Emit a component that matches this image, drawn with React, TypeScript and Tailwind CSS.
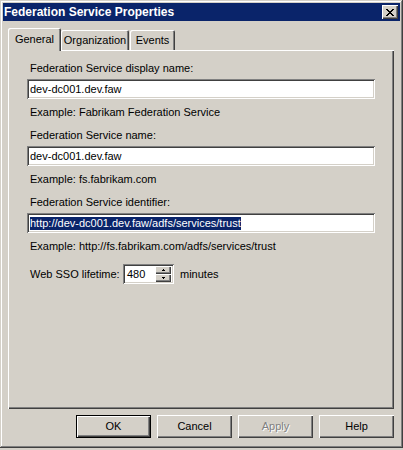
import React from 'react';

const raised =
  'shadow-[inset_1px_1px_#ffffff,inset_-1px_-1px_#404040,inset_-2px_-2px_#808080]';
const sunken =
  'shadow-[inset_1px_1px_#808080,inset_-1px_-1px_#ffffff,inset_2px_2px_#404040,inset_-2px_-2px_#d4d0c8]';

function Field({ label, value, example, selected }: { label: string; value: string; example: string; selected?: boolean }) {
  return (
    <div className="flex flex-col">
      <div className="pl-[3px] leading-[13px]">{label}</div>
      <div className={`mt-[4px] h-[20px] w-[348px] bg-white pl-[3px] flex items-center ${sunken}`}>
        {selected ? (
          <span className="bg-[#0a246a] text-white leading-[13px]">{value}</span>
        ) : (
          <span className="leading-[13px]">{value}</span>
        )}
      </div>
      <div className="mt-[7px] pl-[3px] leading-[13px]">{example}</div>
    </div>
  );
}

function Tab({ label, active, className }: { label: string; active?: boolean; className: string }) {
  return (
    <div
      className={`flex items-center justify-center bg-[#d4d0c8] rounded-t-[2px] shadow-[inset_1px_1px_#ffffff,inset_-1px_0_#404040,inset_-2px_0_#808080] ${
        active ? 'relative z-10 h-[23px] -mb-[1px] pb-[1px]' : 'h-[20px] pt-[1px]'
      } ${className}`}
    >
      {label}
    </div>
  );
}

function Button({ label, isDefault, disabled }: { label: string; isDefault?: boolean; disabled?: boolean }) {
  return (
    <div
      className={`w-[75px] h-[23px] flex items-center justify-center ${
        isDefault
          ? 'shadow-[inset_0_0_0_1px_#000000,inset_2px_2px_#ffffff,inset_-2px_-2px_#404040,inset_-3px_-3px_#808080]'
          : raised
      } ${disabled ? 'text-[#808080] [text-shadow:1px_1px_#ffffff]' : ''}`}
    >
      {label}
    </div>
  );
}

export default function App() {
  return (
    <div className="w-[403px] h-[450px] bg-[#d4d0c8] text-black text-[11px] font-['Liberation_Sans',Arial,sans-serif]">
      <div className="h-[448px] flex flex-col p-[3px] shadow-[inset_-1px_-1px_#404040,inset_1px_1px_#d4d0c8,inset_-2px_-2px_#808080,inset_2px_2px_#ffffff]">
        {/* title bar */}
        <div className="h-[18px] bg-[#0a246a] flex items-center pl-[1px] pr-[2px]">
          <span className="text-white font-bold text-[12px] leading-[14px]">Federation Service Properties</span>
          <div className={`ml-auto w-[16px] h-[14px] bg-[#d4d0c8] flex items-center justify-center ${raised}`}>
            <svg width="8" height="7" viewBox="0 0 8 7" shapeRendering="crispEdges">
              <path d="M0 0h2v1h-2zM6 0h2v1h-2zM1 1h2v1h-2zM5 1h2v1h-2zM2 2h4v1h-4zM3 3h2v1h-2zM2 4h4v1h-4zM1 5h2v1h-2zM5 5h2v1h-2zM0 6h2v1h-2zM6 6h2v1h-2z" fill="#000" />
            </svg>
          </div>
        </div>

        <div className="flex-1 flex flex-col pl-[5px] pr-[6px] pt-[7px]">
          {/* tabs */}
          <div className="flex items-end h-[22px]">
            <Tab label="General" active className="w-[53px]" />
            <Tab label="Organization" className="w-[68px]" />
            <Tab label="Events" className="ml-[1px] w-[45px]" />
          </div>

          {/* General page */}
          <div className={`w-[386px] h-[359px] flex flex-col pt-[12px] pl-[19px] ${raised}`}>
            <Field
              label="Federation Service display name:"
              value="dev-dc001.dev.faw"
              example="Example: Fabrikam Federation Service"
            />
            <div className="mt-[10px]">
              <Field label="Federation Service name:" value="dev-dc001.dev.faw" example="Example: fs.fabrikam.com" />
            </div>
            <div className="mt-[10px]">
              <Field
                label="Federation Service identifier:"
                value="http://dev-dc001.dev.faw/adfs/services/trust"
                example="Example: http://fs.fabrikam.com/adfs/services/trust"
                selected
              />
            </div>
            <div className="mt-[11px] flex items-center">
              <span className="pl-[3px] w-[96px] leading-[13px]">Web SSO lifetime:</span>
              <div className={`w-[51px] h-[20px] bg-white flex items-center pl-[4px] pr-[3px] ${sunken}`}>
                <span className="leading-[13px]">480</span>
                <div className="ml-auto flex flex-col">
                  <div className={`w-[16px] h-[8px] bg-[#d4d0c8] flex items-center justify-center ${raised}`}>
                    <svg width="5" height="3" viewBox="0 0 5 3" shapeRendering="crispEdges">
                      <path d="M2 0h1v1h-1zM1 1h3v1h-3z" fill="#000" />
                    </svg>
                  </div>
                  <div className={`w-[16px] h-[8px] bg-[#d4d0c8] flex items-center justify-center ${raised}`}>
                    <svg width="5" height="3" viewBox="0 0 5 3" shapeRendering="crispEdges">
                      <path d="M1 0h3v1h-3zM2 1h1v1h-1z" fill="#000" />
                    </svg>
                  </div>
                </div>
              </div>
              <span className="ml-[6px] leading-[13px]">minutes</span>
            </div>
          </div>

          {/* dialog buttons */}
          <div className="mt-[6px] flex justify-end gap-[6px]">
            <Button label="OK" isDefault />
            <Button label="Cancel" />
            <Button label="Apply" disabled />
            <Button label="Help" />
          </div>
        </div>
      </div>
    </div>
  );
}
